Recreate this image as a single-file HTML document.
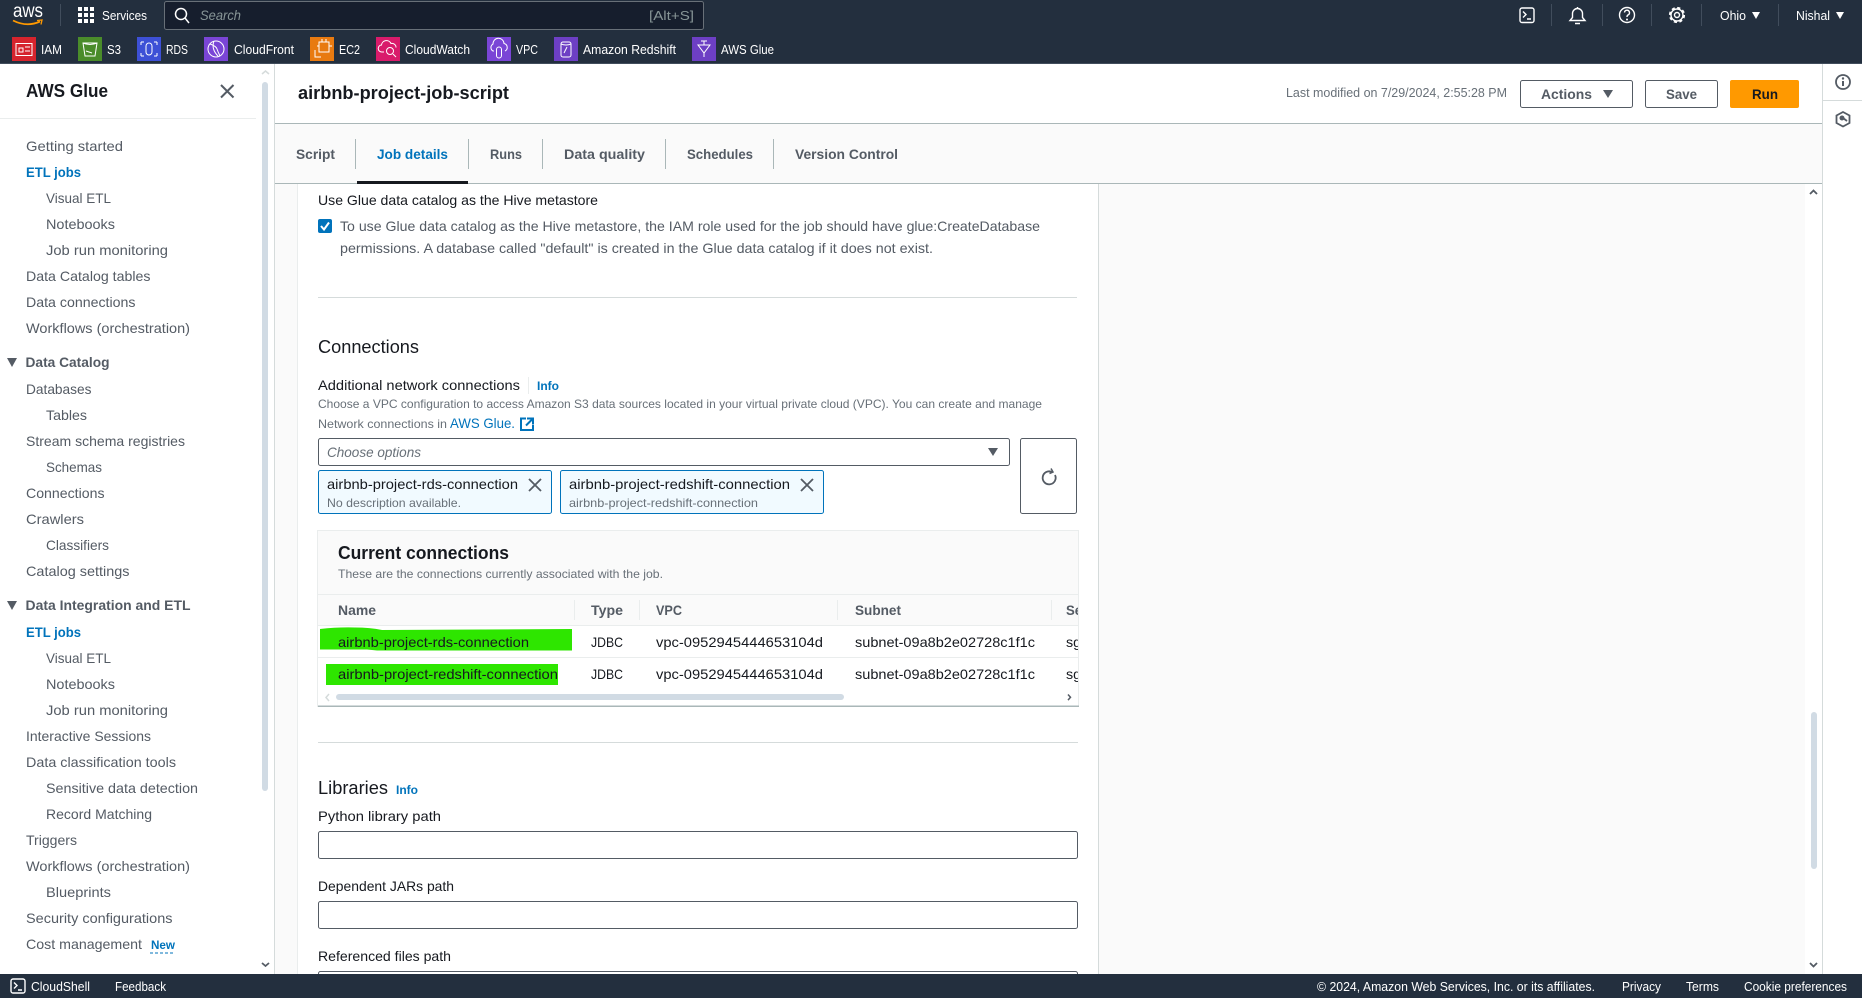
<!DOCTYPE html>
<html lang="en"><head><meta charset="utf-8"><title>airbnb-project-job-script</title>
<style>
html,body{margin:0;padding:0;width:1862px;height:998px;overflow:hidden;background:#fff}
svg{display:block;font-family:"Liberation Sans",sans-serif}
text{white-space:pre}
.n{font-size:14px;fill:#545b64}
.b{font-weight:700}
.w{fill:#fff;font-size:13px}
.t{font-size:14px;fill:#16191f}
.l{fill:#0073bb}
.s{font-size:12px;fill:#687078}
.g{font-size:14px;fill:#545b64}
.i{fill:none;stroke:#fff;stroke-width:1.4}
</style></head><body>
<svg width="1862" height="998" viewBox="0 0 1862 998" xmlns="http://www.w3.org/2000/svg">
<defs><clipPath id="cc"><rect x="318" y="595" width="760" height="90"/></clipPath></defs>
<!-- backgrounds -->
<rect width="1862" height="998" fill="#fff"/>
<rect x="275" y="124" width="1547" height="60" fill="#fafafa"/>
<rect x="275" y="184" width="22" height="790" fill="#fafafa"/>
<rect x="1098" y="184" width="707" height="790" fill="#fafafa"/>
<rect x="274" y="64" width="1" height="910" fill="#d5dbdb"/>
<rect x="297" y="184" width="1" height="790" fill="#eaeded"/>
<rect x="1098" y="184" width="1" height="790" fill="#d5dbdb"/>
<rect x="1822" y="64" width="1" height="910" fill="#d5dbdb"/>
<rect x="1823" y="100" width="39" height="1" fill="#d5dbdb"/>
<rect x="275" y="123" width="1547" height="1" fill="#aab7b8"/>
<rect x="275" y="183" width="1547" height="1" fill="#aab7b8"/>

<!-- top bar -->
<rect width="1862" height="64" fill="#232f3e"/>
<rect y="63" width="1862" height="1" fill="#414d5c"/>
<text x="13" y="17" font-size="19" fill="#fff" textLength="30" lengthAdjust="spacingAndGlyphs">aws</text>
<path d="M13 20.500q14 7 27 1" fill="none" stroke="#f90" stroke-width="1.800"/><path d="M37 20.500l5 -.5 -1 4.500" fill="none" stroke="#f90" stroke-width="1.300"/>
<rect x="60" y="4" width="1" height="22" fill="#414d5c"/>
<g fill="#fff"><rect x="78" y="7" width="4" height="4"/><rect x="84" y="7" width="4" height="4"/><rect x="90" y="7" width="4" height="4"/><rect x="78" y="13" width="4" height="4"/><rect x="84" y="13" width="4" height="4"/><rect x="90" y="13" width="4" height="4"/><rect x="78" y="19" width="4" height="4"/><rect x="84" y="19" width="4" height="4"/><rect x="90" y="19" width="4" height="4"/></g>
<text x="102" y="20" class="w" textLength="45" lengthAdjust="spacingAndGlyphs">Services</text>
<rect x="164.500" y="1.500" width="539" height="28" rx="2" fill="#161e2d" stroke="#687078"/>
<circle cx="181" cy="14" r="5.500" fill="none" stroke="#fff" stroke-width="1.500"/><path d="M185 18l4 5" stroke="#fff" stroke-width="1.500"/>
<text x="200" y="20" font-size="14" font-style="italic" fill="#879596" textLength="41" lengthAdjust="spacingAndGlyphs">Search</text>
<text x="649" y="20" font-size="13" fill="#879596" textLength="45" lengthAdjust="spacingAndGlyphs">[Alt+S]</text>

<!-- top right -->
<rect x="1520" y="8" width="14" height="14.500" rx="2" class="i" stroke-width="1.500"/><path d="M1523 11.500l3 3 -3 3M1527 19h4" class="i"/>
<path d="M1570 20.500h15l-2.500 -3v-4a5 5 0 0 0 -10 0v4zM1575 23.500h5M1577.500 7v2" class="i" stroke-width="1.500"/>
<circle cx="1627" cy="15" r="7.500" class="i" stroke-width="1.500"/><path d="M1624.500 12.500a2.500 2.500 0 1 1 3.500 2.500q-1 .5 -1 2" class="i"/><circle cx="1627" cy="19.500" r="1" fill="#fff"/>
<circle cx="1677" cy="15" r="2.500" class="i"/><circle cx="1677" cy="15" r="6" class="i" stroke-width="1.500"/><circle cx="1677" cy="15" r="7.300" fill="none" stroke="#fff" stroke-width="1.600" stroke-dasharray="3.200 2.530"/>
<g fill="#414d5c"><rect x="1551" y="4" width="1" height="22"/><rect x="1602" y="4" width="1" height="22"/><rect x="1651" y="4" width="1" height="22"/><rect x="1701" y="4" width="1" height="22"/><rect x="1778" y="4" width="1" height="22"/></g>
<text x="1720" y="20" class="w" textLength="26" lengthAdjust="spacingAndGlyphs">Ohio</text><path d="M1752 12h8l-4 7z" fill="#fff"/>
<text x="1796" y="20" class="w" textLength="34" lengthAdjust="spacingAndGlyphs">Nishal</text><path d="M1836 12h8l-4 7z" fill="#fff"/>

<!-- favorites -->
<g>
<rect x="12" y="37" width="24" height="24" fill="#d6242d"/><rect x="16" y="43.500" width="16" height="12" fill="none" stroke="#fff"/><rect x="19" y="48" width="4" height="4" fill="none" stroke="#fff"/><path d="M25 47h5M25 51h5" stroke="#fff"/>
<text x="41" y="54" class="w" textLength="21" lengthAdjust="spacingAndGlyphs">IAM</text>
<rect x="78" y="37" width="24" height="24" fill="#4a8c2a"/><path d="M83 43h14l-2 13h-10zM83 43q7 3 14 0M86 51l6 2" fill="none" stroke="#fff"/>
<text x="107" y="54" class="w" textLength="14" lengthAdjust="spacingAndGlyphs">S3</text>
<rect x="137" y="37" width="24" height="24" fill="#3d50d6"/><rect x="146" y="43" width="6" height="12" rx="3" fill="none" stroke="#fff"/><path d="M141 42h3M154 42h3M141 56h3M154 56h3M141 42v3M157 42v3M141 53v3M157 53v3" stroke="#fff"/>
<text x="166" y="54" class="w" textLength="22" lengthAdjust="spacingAndGlyphs">RDS</text>
<rect x="204" y="37" width="24" height="24" fill="#7a45d6"/><circle cx="216" cy="49" r="8" fill="none" stroke="#fff"/><path d="M210 44q6 2 7 5t3 7M214 41q-3 8 4 15" fill="none" stroke="#fff"/>
<text x="234" y="54" class="w" textLength="60" lengthAdjust="spacingAndGlyphs">CloudFront</text>
<rect x="310" y="37" width="24" height="24" fill="#e87a10"/><rect x="319" y="42" width="10" height="10" fill="none" stroke="#fff"/><path d="M315 50v7h6M322 39v3M326 39v3M329 46h3M317 46h2" fill="none" stroke="#fff"/>
<text x="339" y="54" class="w" textLength="21" lengthAdjust="spacingAndGlyphs">EC2</text>
<rect x="376" y="37" width="24" height="24" fill="#d91b6b"/><path d="M384 52h-2a3.500 3.500 0 0 1 -.5 -7 5 5 0 0 1 9.500 -1.500 4 4 0 0 1 5 4" fill="none" stroke="#fff"/><circle cx="390" cy="51" r="3.500" fill="none" stroke="#fff"/><path d="M393 54l3 3" stroke="#fff"/>
<text x="405" y="54" class="w" textLength="65" lengthAdjust="spacingAndGlyphs">CloudWatch</text>
<rect x="487" y="37" width="24" height="24" fill="#7a45d6"/><path d="M494 51h-1a4 4 0 0 1 0 -7 5.500 5.500 0 0 1 11 -.5 4 4 0 0 1 1 7.500" fill="none" stroke="#fff"/><rect x="496.500" y="47" width="5" height="11" rx="2.500" fill="none" stroke="#fff"/>
<text x="516" y="54" class="w" textLength="22" lengthAdjust="spacingAndGlyphs">VPC</text>
<rect x="554" y="37" width="24" height="24" fill="#6d3fc4"/><rect x="561" y="42" width="10" height="15" rx="2" fill="none" stroke="#fff"/><path d="M561 44q5 2 10 0M564 53l3 -6" fill="none" stroke="#fff"/>
<text x="583" y="54" class="w" textLength="93" lengthAdjust="spacingAndGlyphs">Amazon Redshift</text>
<rect x="692" y="37" width="24" height="24" fill="#6d3fc4"/><path d="M698 45h12l-6 8zM704 53v4M704 41v4M701 41h6" fill="none" stroke="#fff"/>
<text x="721" y="54" class="w" textLength="53" lengthAdjust="spacingAndGlyphs">AWS Glue</text>
</g>

<!-- sidebar -->
<text x="26" y="97" font-size="18" font-weight="700" fill="#16191f" textLength="82" lengthAdjust="spacingAndGlyphs">AWS Glue</text>
<path d="M221 85l12.500 12.500M233.500 85l-12.500 12.500" stroke="#545b64" stroke-width="2"/>
<rect y="118" width="256" height="1" fill="#eaeded"/>
<path d="M262 74l3.500 -3 3.500 3" fill="none" stroke="#d5dbdb" stroke-width="1.500"/>
<rect x="262" y="82" width="6" height="709" rx="3" fill="#d1dbe4"/>
<path d="M262 963l3.500 3 3.500 -3" fill="none" stroke="#545b64" stroke-width="1.800"/>
<g class="n">
<text x="26" y="151" textLength="97" lengthAdjust="spacingAndGlyphs">Getting started</text>
<text x="26" y="177" class="b l" textLength="55" lengthAdjust="spacingAndGlyphs">ETL jobs</text>
<text x="46" y="203" textLength="65" lengthAdjust="spacingAndGlyphs">Visual ETL</text>
<text x="46" y="229" textLength="69" lengthAdjust="spacingAndGlyphs">Notebooks</text>
<text x="46" y="255" textLength="122" lengthAdjust="spacingAndGlyphs">Job run monitoring</text>
<text x="26" y="281" textLength="124.500" lengthAdjust="spacingAndGlyphs">Data Catalog tables</text>
<text x="26" y="307" textLength="109.500" lengthAdjust="spacingAndGlyphs">Data connections</text>
<text x="26" y="333" textLength="164" lengthAdjust="spacingAndGlyphs">Workflows (orchestration)</text>
<text x="25.500" y="367" class="b" textLength="84" lengthAdjust="spacingAndGlyphs">Data Catalog</text>
<text x="26" y="394" textLength="65.500" lengthAdjust="spacingAndGlyphs">Databases</text>
<text x="46" y="420" textLength="41" lengthAdjust="spacingAndGlyphs">Tables</text>
<text x="26" y="446" textLength="159" lengthAdjust="spacingAndGlyphs">Stream schema registries</text>
<text x="46" y="472" textLength="56" lengthAdjust="spacingAndGlyphs">Schemas</text>
<text x="26" y="498" textLength="78.500" lengthAdjust="spacingAndGlyphs">Connections</text>
<text x="26" y="524" textLength="58" lengthAdjust="spacingAndGlyphs">Crawlers</text>
<text x="46" y="550" textLength="63" lengthAdjust="spacingAndGlyphs">Classifiers</text>
<text x="26" y="576" textLength="103.500" lengthAdjust="spacingAndGlyphs">Catalog settings</text>
<text x="25.500" y="610" class="b" textLength="165" lengthAdjust="spacingAndGlyphs">Data Integration and ETL</text>
<text x="26" y="637" class="b l" textLength="55" lengthAdjust="spacingAndGlyphs">ETL jobs</text>
<text x="46" y="663" textLength="65" lengthAdjust="spacingAndGlyphs">Visual ETL</text>
<text x="46" y="689" textLength="69" lengthAdjust="spacingAndGlyphs">Notebooks</text>
<text x="46" y="715" textLength="122" lengthAdjust="spacingAndGlyphs">Job run monitoring</text>
<text x="26" y="741" textLength="125" lengthAdjust="spacingAndGlyphs">Interactive Sessions</text>
<text x="26" y="767" textLength="150" lengthAdjust="spacingAndGlyphs">Data classification tools</text>
<text x="46" y="793" textLength="152" lengthAdjust="spacingAndGlyphs">Sensitive data detection</text>
<text x="46" y="819" textLength="106" lengthAdjust="spacingAndGlyphs">Record Matching</text>
<text x="26" y="845" textLength="51" lengthAdjust="spacingAndGlyphs">Triggers</text>
<text x="26" y="871" textLength="164" lengthAdjust="spacingAndGlyphs">Workflows (orchestration)</text>
<text x="46" y="897" textLength="65" lengthAdjust="spacingAndGlyphs">Blueprints</text>
<text x="26" y="923" textLength="146.500" lengthAdjust="spacingAndGlyphs">Security configurations</text>
<text x="26" y="949" textLength="116" lengthAdjust="spacingAndGlyphs">Cost management</text>
</g>
<text x="151" y="949" font-size="12" font-weight="700" class="l" textLength="24" lengthAdjust="spacingAndGlyphs">New</text>
<path d="M150 953h25" stroke="#0073bb" stroke-dasharray="3 2"/>
<path d="M7 358h10l-5 9z" fill="#545b64"/><path d="M7 601h10l-5 9z" fill="#545b64"/>

<!-- header -->
<text x="298" y="99" font-size="18" font-weight="700" fill="#16191f" textLength="211" lengthAdjust="spacingAndGlyphs">airbnb-project-job-script</text>
<text x="1286" y="97" font-size="12.500" fill="#687078" textLength="221" lengthAdjust="spacingAndGlyphs">Last modified on 7/29/2024, 2:55:28 PM</text>
<rect x="1520.500" y="80.500" width="112" height="27" rx="2" fill="#fff" stroke="#545b64"/>
<text x="1541" y="99" class="g b" textLength="51" lengthAdjust="spacingAndGlyphs">Actions</text><path d="M1603 90h10l-5 8z" fill="#545b64"/>
<rect x="1645.500" y="80.500" width="72" height="27" rx="2" fill="#fff" stroke="#545b64"/>
<text x="1666" y="99" class="g b" textLength="31" lengthAdjust="spacingAndGlyphs">Save</text>
<rect x="1730" y="80" width="69" height="28" rx="2" fill="#f90"/>
<text x="1752" y="99" class="t b" textLength="26" lengthAdjust="spacingAndGlyphs">Run</text>
<circle cx="1843" cy="82" r="7" fill="none" stroke="#545b64" stroke-width="1.800"/><rect x="1842" y="81" width="2" height="5" fill="#545b64"/><circle cx="1843" cy="78.500" r="1.200" fill="#545b64"/>
<path d="M1843 112l6.500 3.500v7.500l-6.500 3.500 -6.500 -3.500v-7.500z" fill="none" stroke="#545b64" stroke-width="1.800"/><circle cx="1842" cy="118" r="2.500" fill="#545b64"/><path d="M1843 118l4 3" stroke="#545b64" stroke-width="1.800"/>

<!-- tabs -->
<g class="g b">
<text x="296" y="159" textLength="39" lengthAdjust="spacingAndGlyphs">Script</text>
<text x="377" y="159" class="l" textLength="71" lengthAdjust="spacingAndGlyphs">Job details</text>
<text x="490" y="159" textLength="32" lengthAdjust="spacingAndGlyphs">Runs</text>
<text x="564" y="159" textLength="81" lengthAdjust="spacingAndGlyphs">Data quality</text>
<text x="687" y="159" textLength="66" lengthAdjust="spacingAndGlyphs">Schedules</text>
<text x="795" y="159" textLength="103" lengthAdjust="spacingAndGlyphs">Version Control</text>
</g>
<g fill="#aab7b8"><rect x="355" y="139" width="1" height="30"/><rect x="468" y="139" width="1" height="30"/><rect x="542" y="139" width="1" height="30"/><rect x="665" y="139" width="1" height="30"/><rect x="773" y="139" width="1" height="30"/></g>
<rect x="357" y="181" width="111" height="3" fill="#16191f"/>

<!-- main scrollbar -->
<rect x="1805" y="184" width="17" height="790" fill="#fff"/>
<path d="M1810 194l3.500 -3.500 3.500 3.500" fill="none" stroke="#545b64" stroke-width="1.800"/>
<rect x="1811" y="712" width="6" height="157" rx="3" fill="#d1dbe4"/>
<path d="M1810 963l3.500 3.500 3.500 -3.500" fill="none" stroke="#545b64" stroke-width="1.800"/>

<!-- content -->
<text x="318" y="205" class="t" textLength="280" lengthAdjust="spacingAndGlyphs">Use Glue data catalog as the Hive metastore</text>
<rect x="318" y="219" width="14" height="14" rx="2" fill="#0073bb"/><path d="M321 226l3 3.500 5 -7" fill="none" stroke="#fff" stroke-width="2"/>
<text x="340" y="231" class="g" textLength="700" lengthAdjust="spacingAndGlyphs">To use Glue data catalog as the Hive metastore, the IAM role used for the job should have glue:CreateDatabase</text>
<text x="340" y="253" class="g" textLength="593" lengthAdjust="spacingAndGlyphs">permissions. A database called "default" is created in the Glue data catalog if it does not exist.</text>
<rect x="318" y="297" width="759" height="1" fill="#d5dbdb"/>
<text x="318" y="353" font-size="18" fill="#16191f" textLength="101" lengthAdjust="spacingAndGlyphs">Connections</text>
<text x="318" y="390" class="t" textLength="202" lengthAdjust="spacingAndGlyphs">Additional network connections</text>
<rect x="528" y="377" width="1" height="17" fill="#eaeded"/>
<text x="537" y="390" font-size="12" font-weight="700" class="l" textLength="22" lengthAdjust="spacingAndGlyphs">Info</text>
<text x="318" y="408" class="s" textLength="724" lengthAdjust="spacingAndGlyphs">Choose a VPC configuration to access Amazon S3 data sources located in your virtual private cloud (VPC). You can create and manage</text>
<text x="318" y="428" class="s" textLength="129" lengthAdjust="spacingAndGlyphs">Network connections in</text>
<text x="450" y="428" font-size="14" class="l" textLength="65" lengthAdjust="spacingAndGlyphs">AWS Glue.</text>
<path d="M526 418.500h-5v11.500h12v-5M527 418.500h6v6M533 418.500l-7 7" fill="none" stroke="#0073bb" stroke-width="2"/>
<rect x="318.500" y="438.500" width="691" height="27" rx="2" fill="#fff" stroke="#545b64"/>
<text x="327" y="457" font-size="14" font-style="italic" fill="#687078" textLength="94" lengthAdjust="spacingAndGlyphs">Choose options</text>
<path d="M988 448h10l-5 8z" fill="#545b64"/>
<rect x="1020.500" y="438.500" width="56" height="75" rx="2" fill="#fff" stroke="#545b64"/>
<g transform="translate(2 5)"><path d="M1053 470a6.500 6.500 0 1 1 -3 -3" fill="none" stroke="#545b64" stroke-width="1.800"/><path d="M1049 463.500l2 3.500 -3.500 1.500" fill="none" stroke="#545b64" stroke-width="1.500"/></g>
<rect x="318.500" y="470.500" width="233" height="43" rx="2" fill="#f1faff" stroke="#0073bb"/>
<text x="327" y="489" class="t" textLength="191" lengthAdjust="spacingAndGlyphs">airbnb-project-rds-connection</text>
<path d="M529 479l12 12M541 479l-12 12" stroke="#545b64" stroke-width="1.800"/>
<text x="327" y="507" class="s" textLength="134" lengthAdjust="spacingAndGlyphs">No description available.</text>
<rect x="560.500" y="470.500" width="263" height="43" rx="2" fill="#f1faff" stroke="#0073bb"/>
<text x="569" y="489" class="t" textLength="221" lengthAdjust="spacingAndGlyphs">airbnb-project-redshift-connection</text>
<path d="M801 479l12 12M813 479l-12 12" stroke="#545b64" stroke-width="1.800"/>
<text x="569" y="507" class="s" textLength="189" lengthAdjust="spacingAndGlyphs">airbnb-project-redshift-connection</text>

<!-- table card -->
<rect x="317.500" y="530.500" width="761" height="176" fill="#fff" stroke="#eaeded"/>
<rect x="318" y="705.500" width="761" height="1.500" fill="#aab7b8"/>
<rect x="318" y="531" width="760" height="95" fill="#fafafa"/>
<text x="338" y="559" font-size="18" font-weight="700" fill="#16191f" textLength="171" lengthAdjust="spacingAndGlyphs">Current connections</text>
<text x="338" y="578" class="s" textLength="325" lengthAdjust="spacingAndGlyphs">These are the connections currently associated with the job.</text>
<rect x="318" y="594" width="760" height="1" fill="#eaeded"/>
<rect x="318" y="625" width="760" height="1" fill="#eaeded"/>
<rect x="318" y="657" width="760" height="1" fill="#eaeded"/>
<g fill="#eaeded"><rect x="574" y="600" width="1" height="20"/><rect x="639" y="600" width="1" height="20"/><rect x="837" y="600" width="1" height="20"/><rect x="1051" y="600" width="1" height="20"/></g>
<path d="M320 629q18 -2 35 -1.500q15 0 27 2.500l190 -1v21.500h-195l-10 -1h-47z" fill="#2ee600"/>
<rect x="326" y="664" width="232" height="21" fill="#2ee600"/>
<g clip-path="url(#cc)">
<g class="g b"><text x="338" y="615" textLength="38" lengthAdjust="spacingAndGlyphs">Name</text><text x="591" y="615" textLength="32" lengthAdjust="spacingAndGlyphs">Type</text><text x="656" y="615" textLength="26" lengthAdjust="spacingAndGlyphs">VPC</text><text x="855" y="615" textLength="46" lengthAdjust="spacingAndGlyphs">Subnet</text><text x="1066" y="615" textLength="52" lengthAdjust="spacingAndGlyphs">Security</text></g>
<g class="t">
<text x="338" y="647" textLength="191" lengthAdjust="spacingAndGlyphs">airbnb-project-rds-connection</text>
<text x="591" y="647" textLength="32" lengthAdjust="spacingAndGlyphs">JDBC</text><text x="656" y="647" textLength="167" lengthAdjust="spacingAndGlyphs">vpc-0952945444653104d</text><text x="855" y="647" textLength="180" lengthAdjust="spacingAndGlyphs">subnet-09a8b2e02728c1f1c</text><text x="1066" y="647" textLength="150" lengthAdjust="spacingAndGlyphs">sg-0a1b2c3d4e5f67890</text>
<text x="338" y="679" textLength="220" lengthAdjust="spacingAndGlyphs">airbnb-project-redshift-connection</text>
<text x="591" y="679" textLength="32" lengthAdjust="spacingAndGlyphs">JDBC</text><text x="656" y="679" textLength="167" lengthAdjust="spacingAndGlyphs">vpc-0952945444653104d</text><text x="855" y="679" textLength="180" lengthAdjust="spacingAndGlyphs">subnet-09a8b2e02728c1f1c</text><text x="1066" y="679" textLength="150" lengthAdjust="spacingAndGlyphs">sg-0a1b2c3d4e5f67890</text>
</g></g>
<rect x="336" y="694" width="508" height="6" rx="3" fill="#d1dbe4"/>
<path d="M329 694l-3 3.500 3 3.500" fill="none" stroke="#d5dbdb" stroke-width="1.500"/>
<path d="M1068 694.500l2.500 2.800 -2.500 2.800" fill="none" stroke="#545b64" stroke-width="1.500"/>

<rect x="318" y="742" width="760" height="1" fill="#d5dbdb"/>
<text x="318" y="794" font-size="18" fill="#16191f" textLength="70" lengthAdjust="spacingAndGlyphs">Libraries</text>
<text x="396" y="794" font-size="12" font-weight="700" class="l" textLength="22" lengthAdjust="spacingAndGlyphs">Info</text>
<text x="318" y="821" class="t" textLength="123" lengthAdjust="spacingAndGlyphs">Python library path</text>
<rect x="318.500" y="831.500" width="759" height="27" rx="2" fill="#fff" stroke="#545b64"/>
<text x="318" y="891" class="t" textLength="136" lengthAdjust="spacingAndGlyphs">Dependent JARs path</text>
<rect x="318.500" y="901.500" width="759" height="27" rx="2" fill="#fff" stroke="#545b64"/>
<text x="318" y="961" class="t" textLength="133" lengthAdjust="spacingAndGlyphs">Referenced files path</text>
<rect x="318.500" y="971.500" width="759" height="27" rx="2" fill="#fff" stroke="#545b64"/>

<!-- footer -->
<rect y="974" width="1862" height="24" fill="#232f3e"/>
<rect x="11" y="979" width="14" height="14" rx="2" class="i" stroke-width="1.500"/><path d="M14 982.500l3 3 -3 3M18 990h4" class="i"/>
<text x="31" y="991" class="w" textLength="59" lengthAdjust="spacingAndGlyphs">CloudShell</text>
<text x="115" y="991" class="w" textLength="51" lengthAdjust="spacingAndGlyphs">Feedback</text>
<text x="1317" y="991" class="w" textLength="278" lengthAdjust="spacingAndGlyphs">© 2024, Amazon Web Services, Inc. or its affiliates.</text>
<text x="1622" y="991" class="w" textLength="39" lengthAdjust="spacingAndGlyphs">Privacy</text>
<text x="1686" y="991" class="w" textLength="33" lengthAdjust="spacingAndGlyphs">Terms</text>
<text x="1744" y="991" class="w" textLength="103" lengthAdjust="spacingAndGlyphs">Cookie preferences</text>
</svg>
</body></html>
